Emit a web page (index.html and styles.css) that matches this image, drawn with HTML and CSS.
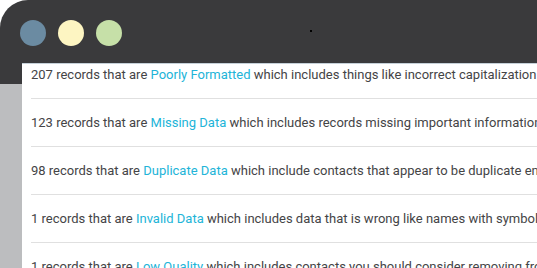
FILE: index.html
```html
<!DOCTYPE html>
<html lang="en">
<head>
  <meta charset="UTF-8" />
  <title>Data Quality Report</title>
  <link rel="stylesheet" href="styles.css">
</head>
<body>
  <div class="window">
    <div class="titlebar">
      <span class="dot dot-blue"></span>
      <span class="dot dot-yellow"></span>
      <span class="dot dot-green"></span>
      <span class="speck"></span>
    </div>
    <div class="window-body">
      <div class="side"></div>
      <div class="panel">
        <ul class="issues">
          <li>207 records that are <a href="#">Poorly Formatted</a> which includes things like incorrect capitalization and formatting</li>
          <li>123 records that are <a href="#">Missing Data</a> which includes records missing important information like email</li>
          <li>98 records that are <a href="#">Duplicate Data</a> which include contacts that appear to be duplicate entries</li>
          <li>1 records that are <a href="#">Invalid Data</a> which includes data that is wrong like names with symbols</li>
          <li>1 records that are <a href="#">Low Quality</a> which includes contacts you should consider removing from your list</li>
        </ul>
      </div>
    </div>
  </div>
</body>
</html>
```

FILE: styles.css
```css
html, body {
  margin: 0;
  padding: 0;
  background: #fff;
  overflow: hidden;
}
body {
  font-family: Roboto, "Liberation Sans", sans-serif;
  width: 537px;
  height: 268px;
}
.window {
  background: #3a3a3c;
  border-top-left-radius: 28px;
  height: 268px;
  display: flex;
  flex-direction: column;
}
.titlebar {
  height: 63px;
  display: flex;
  align-items: center;
  gap: 12px;
  padding: 0 0 0 20px;
  position: relative;
}
.dot {
  width: 26px;
  height: 26px;
  border-radius: 50%;
  margin-top: 3px;
}
.dot-blue { background: #6b8ba2; }
.dot-yellow { background: #fdf5c2; }
.dot-green { background: #c6e0a8; }
.speck {
  position: absolute;
  left: 310px;
  top: 30px;
  width: 2px;
  height: 2px;
  background: #000;
}
.window-body {
  flex: 1;
  display: flex;
  min-height: 0;
}
.side {
  width: 22px;
  flex: none;
  background: linear-gradient(#3a3a3c 21px, #bcbdbf 21px);
}
.panel {
  flex: 1;
  background: #fff;
  border-top: 1px solid #c5d0d8;
  overflow: hidden;
}
.issues {
  list-style: none;
  margin: -13px 0 0;
  padding: 0 0 0 9px;
}
.issues li {
  height: 47px;
  line-height: 47px;
  border-bottom: 1px solid #e0e0e0;
  font-size: 13px;
  color: #444446;
  white-space: nowrap;
}
.issues a {
  color: #22b4d8;
  text-decoration: none;
}
```
